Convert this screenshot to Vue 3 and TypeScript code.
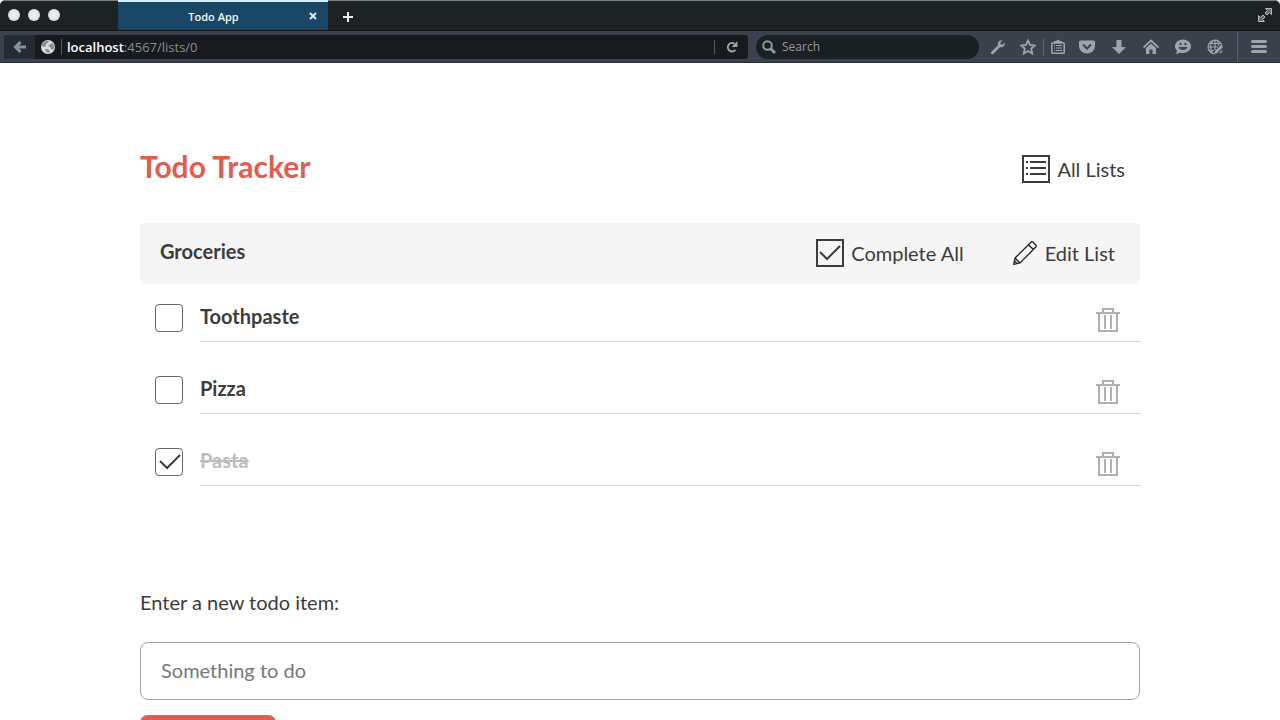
<script setup lang="ts">
import { ref } from 'vue'

interface Todo {
  id: number
  name: string
  done: boolean
}

const todos = ref<Todo[]>([
  { id: 1, name: 'Toothpaste', done: false },
  { id: 2, name: 'Pizza', done: false },
  { id: 3, name: 'Pasta', done: true },
])
const draft = ref('')
let nextId = 4

function addTodo() {
  const name = draft.value.trim()
  if (!name) return
  todos.value.unshift({ id: nextId++, name, done: false })
  draft.value = ''
}

function removeTodo(id: number) {
  todos.value = todos.value.filter((t) => t.id !== id)
}

function completeAll() {
  todos.value.forEach((t) => (t.done = true))
}
</script>

<template>
  <div class="window">
    <header class="chrome">
      <div class="tabstrip">
        <div class="lights">
          <button class="light" aria-label="Close window"></button>
          <button class="light" aria-label="Minimize window"></button>
          <button class="light" aria-label="Zoom window"></button>
        </div>
        <div class="tab">
          <span class="tab-title">Todo App</span>
          <button class="tab-close" aria-label="Close tab">
            <svg width="8" height="8" viewBox="0 0 8 8"><path d="M1 1L7 7M7 1L1 7" stroke="#e6eef4" stroke-width="2" /></svg>
          </button>
        </div>
        <button class="new-tab" aria-label="New tab">
          <svg width="12" height="12" viewBox="0 0 12 12"><path d="M6 1V11M1 6H11" stroke="#eceded" stroke-width="2" /></svg>
        </button>
        <button class="fullscreen" aria-label="Full screen">
          <svg width="16" height="16" viewBox="0 0 16 16">
            <path d="M8.500 1.500H14.500V7.500L12.500 5.500L10 8L8 6L10.500 3.500Z" fill="#666b6e" stroke="#b9bcbe" />
            <path d="M1.500 8.500L3.500 10.500L6 8L8 10L5.500 12.500L7.500 14.500H1.500Z" fill="#666b6e" stroke="#b9bcbe" />
          </svg>
        </button>
      </div>

      <div class="toolbar">
        <div class="urlbar">
          <button class="back" aria-label="Back">
            <svg width="14" height="14" viewBox="0 0 14 14"><path d="M7.500 2L2.500 7L7.500 12M3 7H13" fill="none" stroke="#8b9095" stroke-width="3" /></svg>
          </button>
          <svg class="site" width="14" height="14" viewBox="0 0 14 14">
            <circle cx="7" cy="7" r="7" fill="#dcdddd" />
            <path d="M1 4C3 1 6 0 8 1L7 3L5 4L5 6L3 7L1 6ZM9 4L12 3L13.500 7L12 10L10 9L9 7L7 6ZM4 9L7 9L9 11L8 13L5 12Z" fill="#8d9092" />
          </svg>
          <a class="address" href="#"><b>localhost</b>:4567/lists/0</a>
          <button class="reload" aria-label="Reload">
            <svg width="12" height="12" viewBox="0 0 12 12">
              <path d="M8.500 2.800A4.200 4.200 0 1 0 9.400 8.800" fill="none" stroke="#a0a2a4" stroke-width="2" />
              <path d="M11.500 0V6H5.500Z" fill="#a0a2a4" />
            </svg>
          </button>
        </div>

        <label class="search">
          <svg width="14" height="14" viewBox="0 0 14 14">
            <circle cx="5.500" cy="5.500" r="4.300" fill="none" stroke="#97999b" stroke-width="2" />
            <path d="M8.500 8.500L13 13" stroke="#97999b" stroke-width="2.800" />
          </svg>
          <input type="text" placeholder="Search" aria-label="Search" />
        </label>

        <nav class="tools" aria-label="Browser tools">
          <button class="tool" aria-label="Developer tools">
            <svg width="16" height="16" viewBox="0 0 16 16"><path d="M1.200 13L8 6.200C7.300 3 9.500 .700 12.500 1.200L10.300 3.600L10.800 5.400L12.500 5.700L14.700 3.400C15.300 6.500 13 8.700 9.900 8.200L3.200 14.900C2 16 0 14.400 1.200 13Z" /></svg>
          </button>
          <button class="tool" aria-label="Bookmark this page">
            <svg width="16" height="16" viewBox="0 0 16 16"><path d="M8 1.500L10 6L14.800 6.500L11.200 9.700L12.200 14.500L8 12L3.800 14.500L4.800 9.700L1.200 6.500L6 6Z" class="line" stroke-width="1.800" /></svg>
          </button>
          <span class="divider short"></span>
          <button class="tool narrow" aria-label="Bookmarks">
            <svg width="16" height="16" viewBox="0 0 16 16">
              <path d="M2.500 4H13.500Q14.200 4 14.200 4.700V13.500Q14.200 14.200 13.500 14.200H2.500Q1.800 14.200 1.800 13.500V4.700Q1.800 4 2.500 4Z" class="line" stroke-width="1.600" />
              <path d="M4 4V2H6L8 .500L10 2H12V4ZM4 6H5V7H4ZM6 6H12V7H6ZM4 8.500H5V9.500H4ZM6 8.500H12V9.500H6ZM4 11H5V12H4ZM6 11H12V12H6Z" />
            </svg>
          </button>
          <button class="tool wide" aria-label="Save to Pocket">
            <svg width="16" height="16" viewBox="0 0 16 16"><path d="M1.500 1.500H14.500Q16 1.500 16 3V7A8 7.500 0 0 1 0 7V3Q0 1.500 1.500 1.500Z" /><path d="M4 5.500L8 9.500L12 5.500" class="cut" /></svg>
          </button>
          <button class="tool wide" aria-label="Downloads">
            <svg width="16" height="16" viewBox="0 0 16 16"><path d="M5.500 1H10.500V8H15L8 15L1 8H5.500Z" /></svg>
          </button>
          <button class="tool wide" aria-label="Home">
            <svg width="16" height="16" viewBox="0 0 16 16"><path d="M.500 8.500L8 1.500L15.500 8.500" class="line" stroke-width="1.800" /><path d="M3 9L8 4.500L13 9V15H9.500V10.500H6.500V15H3Z" /></svg>
          </button>
          <button class="tool wide" aria-label="Chat">
            <svg width="16" height="16" viewBox="0 0 16 16"><path d="M8 .500C12.500 .500 16 3.500 16 7.300S12.500 14 8 14C6.800 14 5.700 13.800 4.700 13.400C3.500 14.600 2 15 .500 14.800C1.600 13.900 2 12.700 1.900 11.500C.700 10.300 0 9 0 7.300C0 3.500 3.500 .500 8 .500Z" /><circle cx="5.500" cy="5" r="1.200" class="dark" /><circle cx="10.500" cy="5" r="1.200" class="dark" /><path d="M3.500 8H12.500C11.500 12 4.500 12 3.500 8Z" class="dark" /></svg>
          </button>
          <button class="tool wide" aria-label="Web inspector">
            <svg width="16" height="16" viewBox="0 0 16 16">
              <path d="M7 15A7 7 0 1 1 15 7M8 1V11M1 8H11M2 4.500H14M2 11.500H7M6.500 1C2.500 5 2.500 11 6.500 15M9.500 1C11.500 3 12 5 12 7" class="line" stroke-width="1.200" />
              <path d="M14 6L16 8L10 14L7 15.500L8 12ZM12 14L15.500 10.500L14.500 14Z" />
            </svg>
          </button>
          <span class="divider tall"></span>
          <button class="tool menu" aria-label="Open menu">
            <svg width="16" height="16" viewBox="0 0 16 16"><rect y="1" width="16" height="3" rx="1.500" /><rect y="6" width="16" height="3" rx="1.500" /><rect y="11" width="16" height="3" rx="1.500" /></svg>
          </button>
        </nav>
      </div>
    </header>

    <div class="viewport">
      <main class="page">
        <div class="masthead">
          <h1>Todo Tracker</h1>
          <a class="action" href="#">
            <svg width="28" height="28" viewBox="0 0 28 28">
              <rect x="1" y="1" width="26" height="26" fill="none" stroke="#3c3c3c" stroke-width="2" />
              <path d="M4 7H6M8 7H24M4 13H6M8 13H24M4 19H6M8 19H24" stroke="#3c3c3c" stroke-width="2" />
            </svg>
            All Lists
          </a>
        </div>

        <section>
          <header class="list-head">
            <h2>Groceries</h2>
            <button class="action" type="button" @click="completeAll">
              <svg width="28" height="28" viewBox="0 0 28 28">
                <rect x="1" y="1" width="26" height="26" fill="none" stroke="#3c3c3c" stroke-width="2" />
                <path d="M4 13L11 20L24 7" fill="none" stroke="#3c3c3c" stroke-width="2" />
              </svg>
              Complete All
            </button>
            <a class="action edit" href="#">
              <svg width="24" height="24" viewBox="0 0 24 24">
                <path d="M.700 23.300L2 17L18 1.200Q19 .300 20 1.200L22.800 4Q23.700 5 22.800 6L7 22ZM2 17L7 22M15.500 3.700L20.300 8.500M.700 23.300L1.500 20L4 22.500Z" fill="none" stroke="#222" stroke-width="1.300" />
              </svg>
              Edit List
            </a>
          </header>

          <ul class="todos">
            <li v-for="todo in todos" :key="todo.id" :class="{ done: todo.done }">
              <span class="box">
                <input :id="'todo-' + todo.id" v-model="todo.done" type="checkbox" />
                <svg v-if="todo.done" width="28" height="28" viewBox="0 0 28 28"><path d="M5 13L12 20L25 7" fill="none" stroke="#3c3c3c" stroke-width="2" /></svg>
              </span>
              <div class="entry">
                <label :for="'todo-' + todo.id">{{ todo.name }}</label>
                <button type="button" class="delete" :aria-label="'Delete ' + todo.name" @click="removeTodo(todo.id)">
                  <svg width="24" height="24" viewBox="0 0 24 24"><path d="M7 5V1H17V5M0 5H24M3 5V23H21V5M9 7V21M15 7V21" fill="none" stroke="#b0b0b0" stroke-width="2" /></svg>
                </button>
              </div>
            </li>
          </ul>
        </section>

        <form class="add" @submit.prevent="addTodo">
          <label for="new-todo">Enter a new todo item:</label>
          <input id="new-todo" v-model="draft" type="text" placeholder="Something to do" />
          <button type="submit" aria-label="Add"></button>
        </form>
      </main>
    </div>
  </div>
</template>

<style>
body {
  margin: 0;
}
</style>

<style scoped>
.window {
  display: flex;
  flex-direction: column;
  height: 100vh;
  background: #fff;
  font-family: Lato, "Liberation Sans", sans-serif;
  color: #3c3c3c;
}

button {
  margin: 0;
  padding: 0;
  border: 0;
  background: none;
  font: inherit;
  color: inherit;
  cursor: pointer;
}

svg {
  display: block;
  flex: none;
}

.chrome {
  flex: none;
  font-family: "Open Sans", "Noto Sans", sans-serif;
}

.tabstrip {
  display: flex;
  align-items: stretch;
  box-sizing: border-box;
  height: 31px;
  border-top: 1px solid #7a8083;
  border-bottom: 1px solid #14171a;
  border-radius: 5px 5px 0 0;
  background: #1e2326;
}

.lights {
  display: flex;
  align-items: center;
  gap: 8px;
  box-sizing: border-box;
  width: 118px;
  padding: 0 0 2px 8px;
}

.light {
  width: 12px;
  height: 12px;
  border-radius: 50%;
  background: radial-gradient(#f4f4f4, #dedede 70%, #c4c4c4);
}

.tab {
  display: flex;
  align-items: center;
  box-sizing: border-box;
  width: 210px;
  margin-top: -1px;
  padding-right: 11px;
  border-top: 2px solid #d5efff;
  background: #1a4766;
  color: #f4f8fb;
  font-size: 11px;
  font-weight: 600;
}

.tab-title {
  flex: 1;
  text-align: center;
}

.new-tab {
  display: grid;
  place-items: center;
  width: 40px;
  padding-top: 2px;
}

.fullscreen {
  margin-left: auto;
  padding: 0 7px 2px 0;
}

.toolbar {
  display: flex;
  align-items: center;
  box-sizing: border-box;
  height: 32px;
  padding-left: 4px;
  border-bottom: 1px solid #292d38;
  background: #3b414d;
  font-size: 12px;
}

.urlbar {
  display: flex;
  align-items: center;
  flex: 1;
  height: 24px;
  border-radius: 3px;
  background: #171b1f;
  overflow: hidden;
}

.back {
  display: grid;
  place-items: center;
  width: 31px;
  height: 24px;
  background: #252b33;
}

.site {
  margin: 0 6px;
}

.address {
  flex: 1;
  padding-left: 5px;
  border-left: 1px solid #56595c;
  color: #898c8e;
  font-size: 13px;
  line-height: 16px;
  text-decoration: none;
}

.address b {
  color: #fff;
  font-weight: 600;
}

.reload {
  display: grid;
  place-items: center;
  width: 34px;
  height: 14px;
  border-left: 1px solid #56595c;
}

.search {
  display: flex;
  align-items: center;
  gap: 6px;
  box-sizing: border-box;
  width: 223px;
  height: 24px;
  margin: 0 4px 0 8px;
  padding: 0 6px;
  border-radius: 12px;
  background: #1b2024;
}

.search input {
  flex: 1;
  min-width: 0;
  padding: 0;
  border: 0;
  outline: 0;
  background: none;
  color: #fff;
  font: inherit;
  font-weight: 500;
}

.search input::placeholder {
  color: #97999b;
  opacity: 1;
}

.tools {
  display: flex;
  align-items: center;
}

.tool {
  display: grid;
  place-items: center;
  width: 30px;
  height: 31px;
}

.tool.narrow {
  width: 27px;
}

.tool.wide {
  width: 32px;
}

.tool.menu {
  width: 42px;
}

.tool svg {
  fill: #a0a4aa;
}

.tool .line {
  fill: none;
  stroke: #a0a4aa;
}

.tool .cut {
  fill: none;
  stroke: #3b414d;
  stroke-width: 2;
}

.tool .dark {
  fill: #3b414d;
}

.divider {
  width: 1px;
  background: #5d626c;
}

.divider.short {
  height: 18px;
}

.divider.tall {
  height: 31px;
  margin-left: 6px;
}

.viewport {
  flex: 1;
  min-height: 0;
  overflow-y: auto;
  scrollbar-width: none;
  font-size: 20px;
  line-height: 24px;
}

.page {
  max-width: 1000px;
  margin: 0 auto;
  padding: 88px 20px 40px;
}

.masthead {
  display: flex;
  align-items: flex-start;
  justify-content: space-between;
  margin-bottom: 40px;
  padding-right: 15px;
}

h1,
h2 {
  margin: 0;
}

h1 {
  color: #e05d4f;
  font-size: 30px;
  line-height: 30px;
}

h2 {
  flex: 1;
  padding-bottom: 4px;
  font-size: 20px;
  line-height: 24px;
}

.action {
  display: flex;
  align-items: center;
  gap: 7px;
  color: #3c3c3c;
  text-decoration: none;
}

.masthead .action {
  padding-top: 4px;
}

.list-head {
  display: flex;
  align-items: center;
  box-sizing: border-box;
  height: 61px;
  padding: 0 25px 1px 20px;
  border-radius: 5px;
  background: #f5f5f5;
}

.edit {
  gap: 8px;
  margin-left: 49px;
}

.todos {
  display: grid;
  gap: 32px;
  margin: 0;
  padding: 18px 0 0;
  list-style: none;
}

.todos li {
  display: flex;
  padding-left: 15px;
}

.box {
  display: grid;
  width: 45px;
  padding-top: 2px;
}

.box input,
.box svg {
  grid-area: 1 / 1;
}

.box input {
  appearance: none;
  box-sizing: border-box;
  width: 28px;
  height: 28px;
  margin: 0;
  border: 1px solid #666;
  border-radius: 4px;
  background: #fff;
}

.box svg {
  pointer-events: none;
}

.entry {
  display: flex;
  align-items: flex-start;
  justify-content: space-between;
  flex: 1;
  box-sizing: border-box;
  height: 40px;
  padding: 2px 20px 0 0;
  border-bottom: 1px solid #d5d5d5;
}

.entry label {
  font-weight: 700;
}

.done label {
  color: #bdbdbd;
  text-decoration: line-through;
}

.delete {
  padding-top: 4px;
}

.add {
  display: flex;
  flex-direction: column;
  align-items: flex-start;
  margin-top: 104px;
}

.add input {
  box-sizing: border-box;
  width: 100%;
  height: 58px;
  margin: 28px 0 15px;
  padding: 0 20px 2px;
  border: 1px solid #a3a3a3;
  border-radius: 8px;
  background: #fff;
  color: #3c3c3c;
  font: inherit;
}

.add input::placeholder {
  color: #777;
  opacity: 1;
}

.add button {
  width: 136px;
  height: 50px;
  border-radius: 8px;
  background: #e05d4f;
}
</style>
